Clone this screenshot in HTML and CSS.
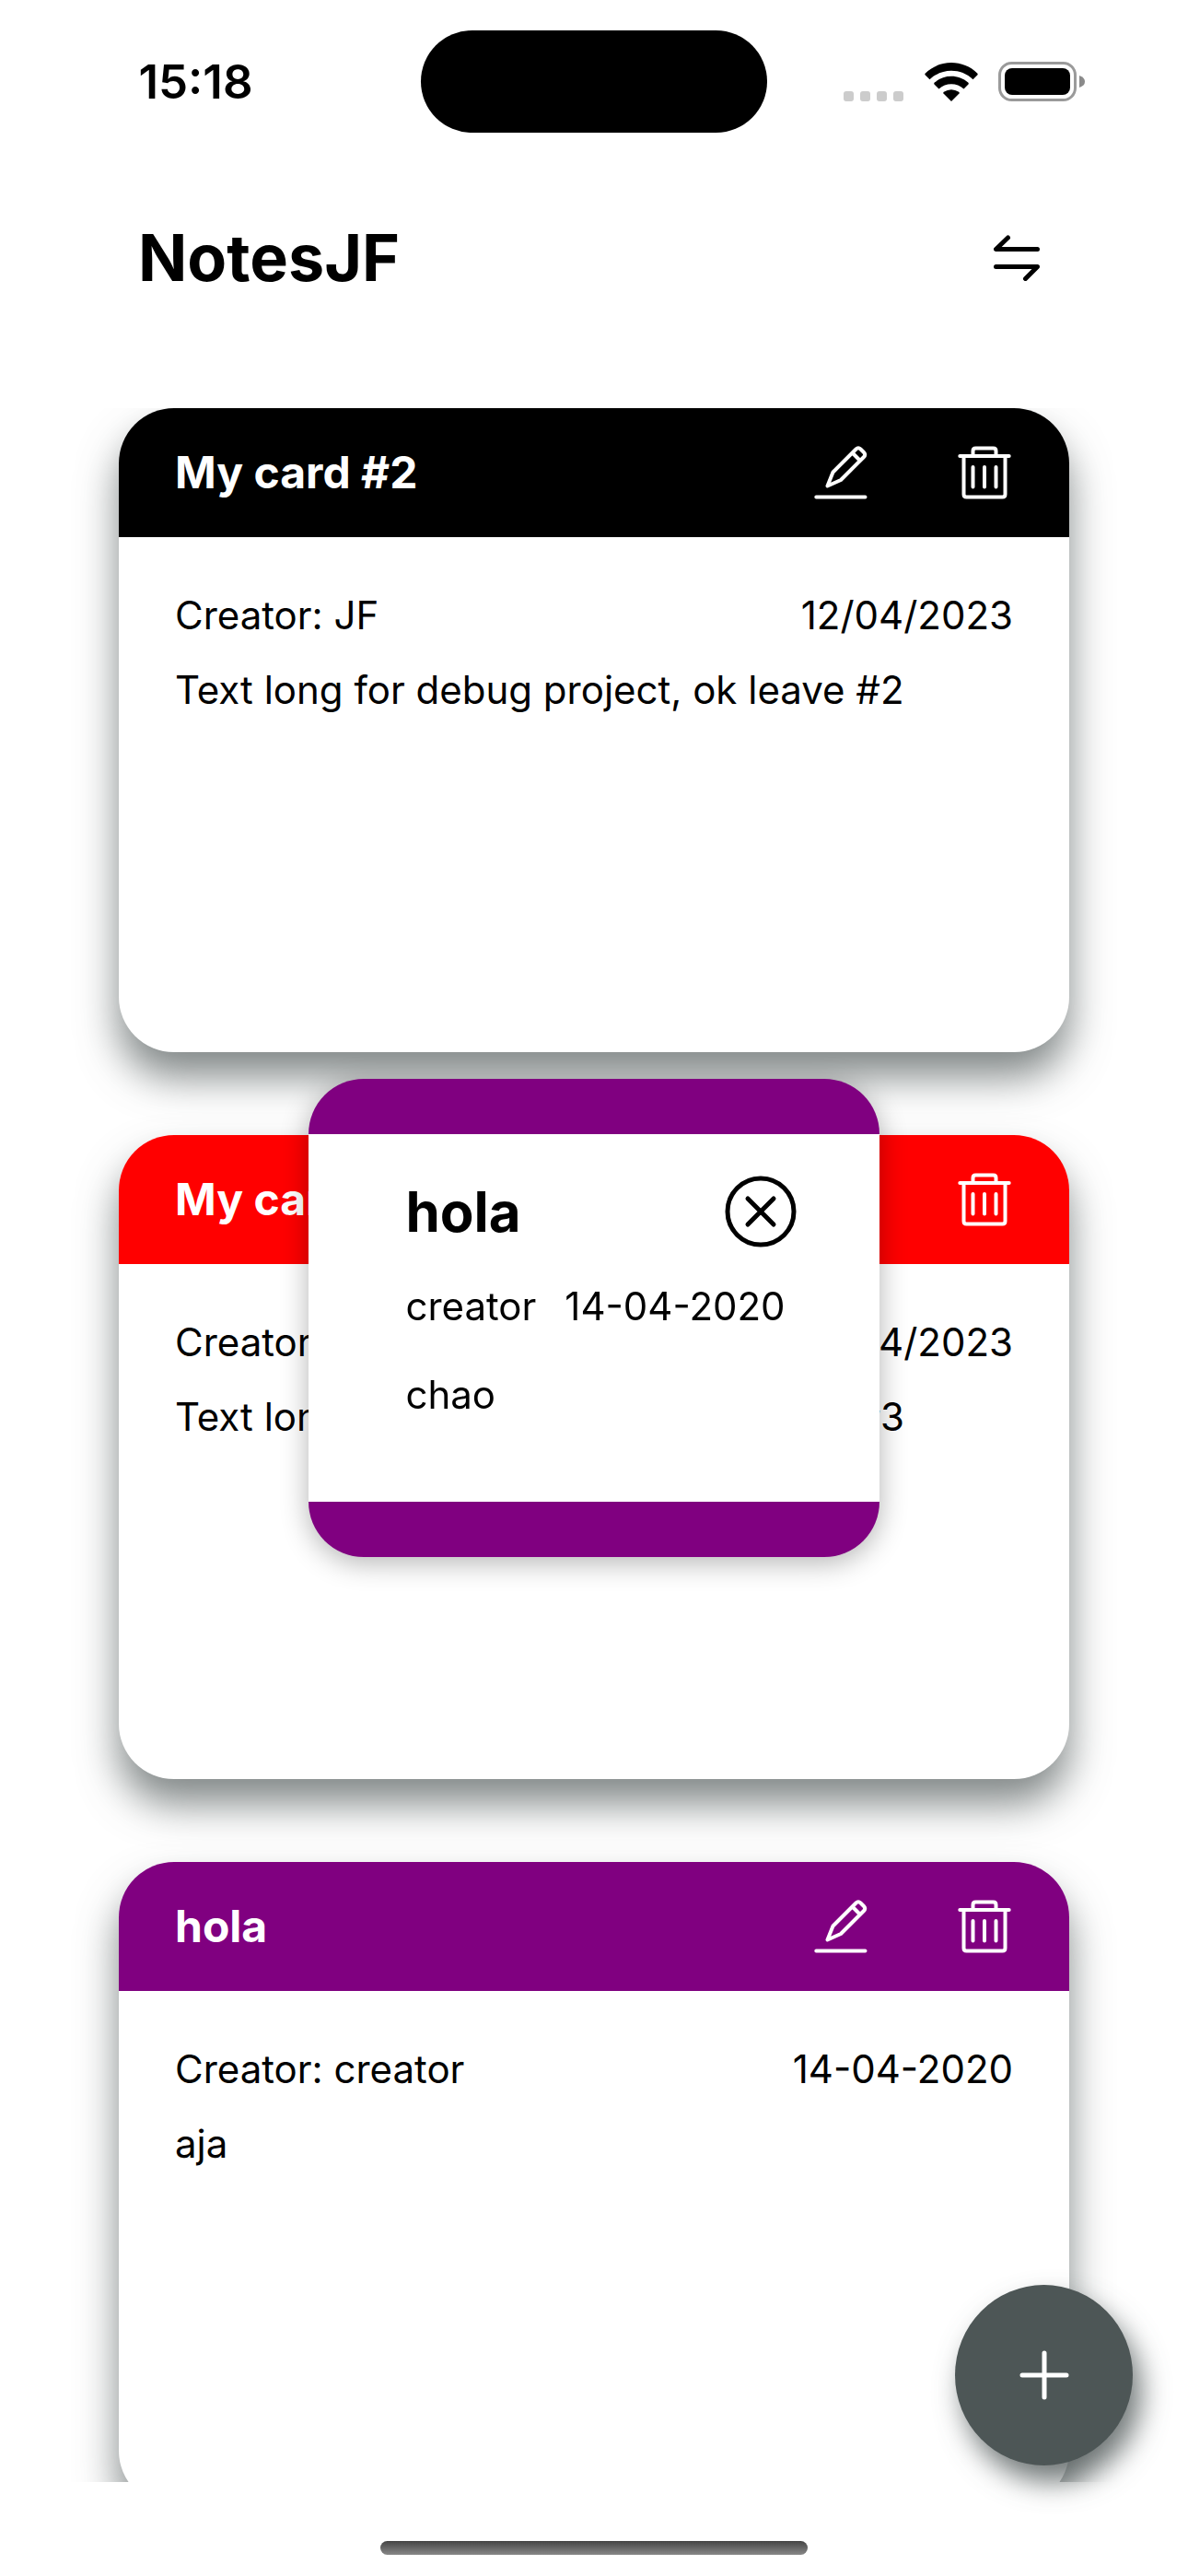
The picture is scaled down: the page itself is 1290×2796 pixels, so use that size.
FILE: index.html
```html
<!DOCTYPE html>
<html lang="en">
<head>
  <meta charset="utf-8">
  <meta name="viewport" content="width=device-width, initial-scale=1">
  <title>NotesJF</title>
  <link rel="stylesheet" href="styles.css">
</head>
<body>
  <svg class="sprite" aria-hidden="true">
    <symbol id="icon-edit" viewBox="0 0 58 58">
      <path d="M2.300 55.500H55.500M14.500 43.500L20.500 28.500L45.500 3.500Q48 1 50.500 3.500L54 7Q56.500 9.500 54 12L29 37L14.500 43.500ZM41.500 7.500L50 16"/>
    </symbol>
    <symbol id="icon-trash" viewBox="0 0 58 58">
      <path d="M2.300 11H55.700M6.500 11V52.500Q6.500 55.500 9.500 55.500H48.500Q51.500 55.500 51.500 52.500V11M16.500 11V5.500Q16.500 2.500 19.500 2.500H38.500Q41.500 2.500 41.500 5.500V11M16.500 23V44.500M29 23V44.500M41.500 23V44.500"/>
    </symbol>
  </svg>

  <div class="status-bar">
    <time class="clock">15:18</time>
    <div class="island"></div>
    <div class="indicators">
      <svg class="signal" viewBox="0 0 65 11" aria-hidden="true">
        <rect width="11" height="11" rx="3"/><rect x="18" width="11" height="11" rx="3"/><rect x="36" width="11" height="11" rx="3"/><rect x="54" width="11" height="11" rx="3"/>
      </svg>
      <svg class="wifi" viewBox="0 0 58 42" aria-hidden="true">
        <path d="M29 42L20.500 33.500Q19.800 32.500 20.800 31.800Q29 26.500 37.200 31.800Q38.200 32.500 37.500 33.500Z"/>
        <path d="M15.500 28.500L10.500 23.500Q9.800 22.500 10.800 21.600C21 12.600 37 12.600 47.200 21.600Q48.200 22.500 47.500 23.500L42.500 28.500C35 21.500 23 21.500 15.500 28.500Z"/>
        <path d="M5.500 18.300L.5 13.300Q0 12.500 .6 11.800C16 -3.900 42 -3.900 57.400 11.800Q58 12.500 57.500 13.300L52.500 18.300C39.500 5.700 18.500 5.700 5.500 18.300Z"/>
      </svg>
      <svg class="battery" viewBox="0 0 94 43" aria-hidden="true">
        <rect class="battery-case" x="1.500" y="1.500" width="82" height="40" rx="13"/>
        <rect x="7" y="7" width="71" height="29" rx="8"/>
        <path class="battery-tip" d="M88 15Q94 17 94 21.500Q94 26 88 28Z"/>
      </svg>
    </div>
  </div>

  <header class="app-header">
    <h1 class="app-title">NotesJF</h1>
    <button class="icon-button swap" type="button" aria-label="Switch layout">
      <svg class="icon" viewBox="0 0 50 50" aria-hidden="true"><path d="M15.500 3L2.500 15.500H47.500M2.500 34.500H47.500L34.500 47.500"/></svg>
    </button>
  </header>

  <main class="notes">
    <article class="card">
      <div class="card-head card-head-black">
        <h2 class="card-title">My card #2</h2>
        <button class="icon-button" type="button" aria-label="Edit"><svg class="icon"><use href="#icon-edit"/></svg></button>
        <button class="icon-button" type="button" aria-label="Delete"><svg class="icon"><use href="#icon-trash"/></svg></button>
      </div>
      <div class="card-body">
        <p class="card-meta"><span>Creator: JF</span><time>12/04/2023</time></p>
        <p class="card-text">Text long for debug project, ok leave #2</p>
      </div>
    </article>
    <article class="card">
      <div class="card-head card-head-red">
        <h2 class="card-title">My card #3</h2>
        <button class="icon-button" type="button" aria-label="Edit"><svg class="icon"><use href="#icon-edit"/></svg></button>
        <button class="icon-button" type="button" aria-label="Delete"><svg class="icon"><use href="#icon-trash"/></svg></button>
      </div>
      <div class="card-body">
        <p class="card-meta"><span>Creator: JF</span><time>12/04/2023</time></p>
        <p class="card-text">Text long for debug project, ok leave #3</p>
      </div>
    </article>
    <article class="card">
      <div class="card-head card-head-purple">
        <h2 class="card-title">hola</h2>
        <button class="icon-button" type="button" aria-label="Edit"><svg class="icon"><use href="#icon-edit"/></svg></button>
        <button class="icon-button" type="button" aria-label="Delete"><svg class="icon"><use href="#icon-trash"/></svg></button>
      </div>
      <div class="card-body">
        <p class="card-meta"><span>Creator: creator</span><time>14-04-2020</time></p>
        <p class="card-text">aja</p>
      </div>
    </article>
  </main>

  <footer class="home-area"><div class="home-indicator"></div></footer>

  <section class="modal" role="dialog" aria-labelledby="modal-title">
    <div class="modal-head">
      <h2 class="modal-title" id="modal-title">hola</h2>
      <button class="icon-button close" type="button" aria-label="Close">
        <svg class="icon" viewBox="0 0 78 78" aria-hidden="true"><circle cx="39" cy="39" r="36"/><path d="M25 25L53 53M53 25L25 53"/></svg>
      </button>
    </div>
    <p class="modal-meta"><span>creator</span><time>14-04-2020</time></p>
    <p class="modal-text">chao</p>
  </section>

  <button class="add" type="button" aria-label="Add note">
    <svg class="icon" viewBox="0 0 54 54" aria-hidden="true"><path d="M27 3V51M3 27H51"/></svg>
  </button>
</body>
</html>
```
FILE: styles.css
```css
* { box-sizing: border-box; }

body {
  display: flex;
  flex-direction: column;
  height: 100vh;
  margin: 0;
  background: #fff;
  color: #000;
  font-family: Inter, "Liberation Sans", sans-serif;
  font-size: 42px;
  line-height: 50px;
}

h1, h2, p { margin: 0; }

button {
  padding: 0;
  border: 0;
  background: none;
  color: inherit;
  font: inherit;
  cursor: pointer;
}

.sprite { position: absolute; width: 0; height: 0; }

.icon {
  display: block;
  width: 100%;
  height: 100%;
  fill: none;
  stroke: currentColor;
  stroke-width: 4;
  stroke-linecap: round;
  stroke-linejoin: round;
}

.icon-button { flex: none; width: 58px; height: 58px; }

/* Status bar */
.status-bar {
  flex: none;
  display: grid;
  grid-template-columns: 1fr 376px 1fr;
  align-items: center;
  height: 177px;
}

.clock {
  padding-right: 32px;
  text-align: center;
  font-size: 51px;
  font-weight: 600;
}

.island { height: 111px; border-radius: 56px; background: #000; }

.indicators {
  display: flex;
  align-items: flex-end;
  justify-content: flex-end;
  padding-right: 112px;
}

.signal { width: 65px; height: 11px; margin-right: 23px; fill: #ccc; }
.wifi { width: 58px; height: 42px; margin-right: 22px; }
.battery { width: 94px; height: 43px; }
.battery-case { fill: none; stroke: #9a9a9a; stroke-width: 3; }
.battery-tip { fill: #8a8a8a; }

/* Header */
.app-header {
  flex: none;
  display: flex;
  align-items: center;
  justify-content: space-between;
  height: 206px;
  margin-bottom: 60px;
  padding: 0 161px 0 150px;
}

.app-title { font-size: 70px; line-height: 84px; font-weight: 700; }
.swap { width: 50px; height: 50px; }
.swap .icon { stroke-width: 5; }

/* Notes list */
.notes {
  flex: 1 1 0;
  min-height: 0;
  display: flex;
  flex-direction: column;
  gap: 90px;
  padding: 0 10%;
  overflow-y: auto;
  scrollbar-width: none;
}

.card {
  flex: none;
  min-height: 699px;
  border-radius: 60px;
  background: #fff;
  box-shadow: 0 27px 44px rgba(77, 86, 86, 0.7);
}

.card-head {
  display: flex;
  align-items: center;
  gap: 98px;
  height: 140px;
  padding: 0 63px 0 61px;
  border-radius: 60px 60px 0 0;
  color: #fff;
}

.card-head-black { background: #000; }
.card-head-red { background: #f00; }
.card-head-purple { background: purple; }

.card-title { flex: 1; font-size: 48px; line-height: 58px; font-weight: 700; }

.card-body {
  display: flex;
  flex-direction: column;
  gap: 31px;
  padding: 60px 61px;
}

.card-meta { display: flex; justify-content: space-between; }

/* Note preview */
.modal {
  position: fixed;
  top: 1171px;
  left: 26%;
  right: 26%;
  display: flex;
  flex-direction: column;
  min-height: 519px;
  padding: 44px 90px 44px 105px;
  border: solid purple;
  border-width: 60px 0;
  border-radius: 60px;
  background: #fff;
  box-shadow: 0 6px 30px rgba(0, 0, 0, 0.3);
}

.modal-head { display: flex; align-items: center; justify-content: space-between; height: 80px; }
.modal-title { font-size: 60px; line-height: 72px; font-weight: 700; }
.close { width: 78px; height: 78px; }
.close .icon { stroke-width: 5; }
.modal-meta { display: flex; gap: 31px; margin-top: 38px; }
.modal-text { margin-top: 46px; }

/* Add button */
.add {
  position: fixed;
  right: 60px;
  bottom: 120px;
  display: grid;
  place-items: center;
  width: 193px;
  height: 196px;
  border-radius: 50%;
  background: #4d5656;
  color: #fff;
  box-shadow: 9px 18px 30px rgba(77, 86, 86, 0.8);
}

.add .icon { width: 54px; height: 54px; stroke-width: 5; }

/* Home indicator */
.home-area { flex: none; height: 102px; padding-top: 64px; }
.home-indicator {
  width: 36%;
  height: 15px;
  margin: 0 auto;
  border-radius: 8px;
  background: linear-gradient(#444, #888);
}
```
